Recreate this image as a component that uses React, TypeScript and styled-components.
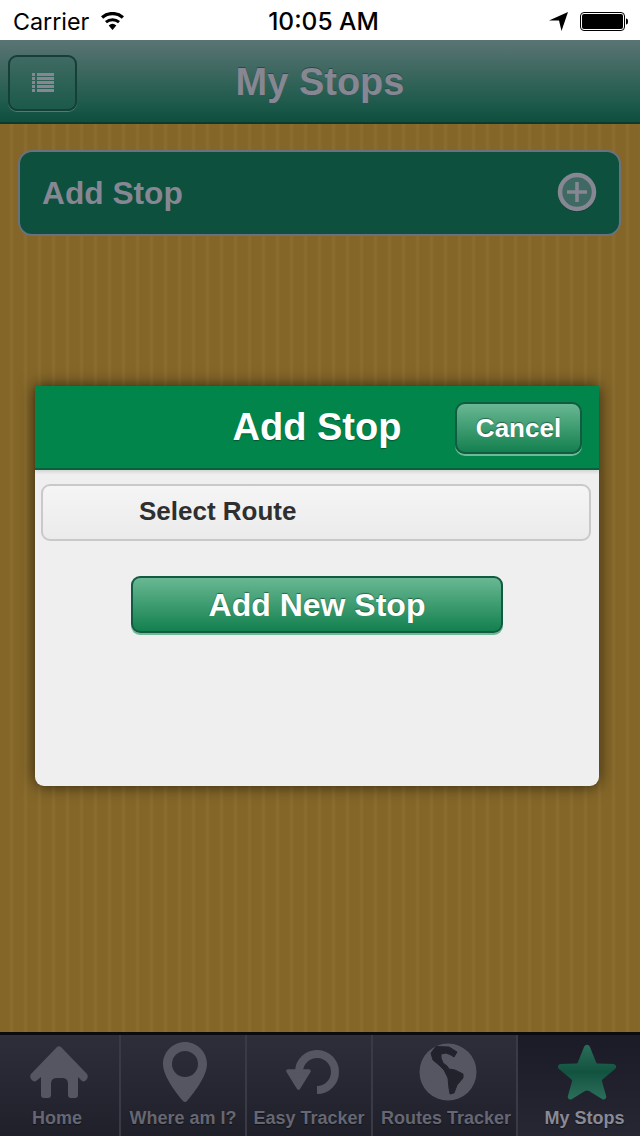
import React from "react";
import styled, { createGlobalStyle } from "styled-components";

const GlobalStyle = createGlobalStyle`
  html, body {
    margin: 0;
    padding: 0;
    width: 640px;
    height: 1136px;
    overflow: hidden;
    font-family: "Liberation Sans", Arial, sans-serif;
  }
  * { box-sizing: border-box; }
`;

const Screen = styled.div`
  position: relative;
  width: 640px;
  height: 1136px;
  display: flex;
  flex-direction: column;
  background: #fff;
`;

const StatusBar = styled.div`
  height: 40px;
  padding: 2px 12px 0 13px;
  display: grid;
  grid-template-columns: 1fr auto 1fr;
  align-items: center;
  background: #fff;
  color: #000;
  font-family: Inter, "Liberation Sans", sans-serif;
`;

const StatusLeft = styled.div`
  display: flex;
  align-items: center;
  gap: 11px;
  font-size: 23.300px;
  font-weight: 400;
`;

const StatusTime = styled.div`
  margin-left: 6px;
  font-size: 24.500px;
  font-weight: 500;
`;

const StatusRight = styled.div`
  display: flex;
  align-items: center;
  justify-content: flex-end;
  gap: 12px;
`;

const NavBar = styled.div`
  position: relative;
  height: 84px;
  flex: none;
  display: flex;
  align-items: center;
  justify-content: center;
  padding-top: 3px;
  background: linear-gradient(#5a7474 0%, #436a64 30%, #1d5a4b 78%, #10503f 97%);
  border-bottom: 2px solid #0d3a30;
`;

const MenuButton = styled.div`
  position: absolute;
  left: 8px;
  top: 15px;
  width: 69px;
  height: 56px;
  display: flex;
  align-items: center;
  justify-content: center;
  border: 2px solid #153f38;
  border-radius: 9px;
  background: linear-gradient(#3f6a63, #1b5a4a);
  box-shadow: 0 1px 0 rgba(120, 150, 145, 0.6);
`;

const NavTitle = styled.div`
  font-size: 38px;
  font-weight: 700;
  color: #868793;
  text-shadow: 0 -1px 0 #2b4a46;
`;

const Content = styled.div`
  flex: 1;
  padding: 26px 19px 26px 18px;
  background: repeating-linear-gradient(
    90deg,
    #846628 0,
    #846628 9px,
    #8b6d30 11px,
    #8b6d30 12px,
    #846628 14px
  );
`;

const AddStopBar = styled.div`
  height: 86px;
  padding: 0 22px;
  display: flex;
  align-items: center;
  justify-content: space-between;
  background: #0e503e;
  border: 2px solid #6a717c;
  border-radius: 14px;
  color: #868793;
  font-size: 31.700px;
  font-weight: 700;
`;

const Overlay = styled.div`
  position: absolute;
  left: 35px;
  top: 386px;
  width: 564px;
  height: 400px;
  display: flex;
  flex-direction: column;
  background: #efefef;
  border-radius: 0 0 9px 9px;
  box-shadow: 0 0 16px rgba(0, 0, 0, 0.65);
`;

const DialogHeader = styled.div`
  position: relative;
  height: 84px;
  flex: none;
  display: flex;
  align-items: center;
  justify-content: center;
  background: #01854b;
  border-bottom: 2px solid #0a5f3c;
  box-shadow: 0 2px 3px rgba(0, 0, 0, 0.12);
`;

const DialogTitle = styled.div`
  font-size: 38px;
  font-weight: 700;
  color: #fff;
  text-shadow: 0 1px 1px rgba(0, 0, 0, 0.35);
`;

const GreenButton = styled.div`
  display: flex;
  align-items: center;
  justify-content: center;
  color: #fff;
  font-weight: 700;
  border: 2px solid #125a42;
  background: linear-gradient(#69b893, #13804f);
  box-shadow: 0 2px 0 #6dbb94;
  text-shadow: 0 -1px 1px rgba(0, 0, 0, 0.4);
`;

const CancelButton = styled(GreenButton)`
  position: absolute;
  right: 17px;
  top: 16px;
  width: 127px;
  height: 52px;
  border-radius: 10px;
  font-size: 26px;
`;

const DialogBody = styled.div`
  padding: 14px 8px 0 6px;
  display: flex;
  flex-direction: column;
  align-items: center;
  gap: 35px;
`;

const SelectRow = styled.div`
  width: 100%;
  height: 57px;
  padding: 0 0 2px 96px;
  display: flex;
  align-items: center;
  background: linear-gradient(#f5f5f5, #ebebeb);
  border: 2px solid #c9c9c9;
  border-radius: 9px;
  color: #2f2f2f;
  font-size: 26px;
  font-weight: 700;
`;

const AddNewButton = styled(GreenButton)`
  width: 372px;
  height: 57px;
  margin-left: 2px;
  padding-top: 2px;
  border-radius: 9px;
  font-size: 32px;
`;

const TabBar = styled.div`
  height: 104px;
  flex: none;
  display: grid;
  grid-template-columns: 121px 126px 126px 145px 122px;
  background: linear-gradient(#2e2e3b, #20202b);
  border-top: 3px solid #0b0b10;
`;

const Tab = styled.div<{ $active?: boolean }>`
  display: flex;
  flex-direction: column;
  align-items: center;
  justify-content: flex-end;
  padding-bottom: 7px;
  border-right: ${(p) => (p.$active ? "none" : "2px solid #3a3a47")};
  background: ${(p) =>
    p.$active ? "linear-gradient(#1b1b27, #272733)" : "transparent"};
`;

const TabIcon = styled.div<{ $shift: number }>`
  height: 66px;
  padding-bottom: 5px;
  margin-left: ${(p) => p.$shift * 2}px;
  display: flex;
  align-items: center;
  justify-content: center;
`;

const TabLabel = styled.div<{ $active?: boolean; $shift: number }>`
  font-size: 18px;
  line-height: 22px;
  font-weight: 700;
  white-space: nowrap;
  margin-left: ${(p) => p.$shift}px;
  margin-right: ${(p) => -p.$shift}px;
  color: ${(p) => (p.$active ? "#8a8a95" : "#666772")};
  text-shadow: 0 1px 1px rgba(0, 0, 0, 0.5);
`;

const tabs = [
  {
    label: "Home",
    iconShift: -0.5,
    labelShift: -2.5,
    icon: (
      <svg width="58" height="52" viewBox="0 0 58 52">
        <path
          fill="#555661"
          d="M27 1c1-1 3-1 4 0l26 27c1 2 1 3 0 5l-2 2c-1 .5-2 .5-3 0l-4-4v18c0 2-1 3-3 3h-4c-2 0-3-1-3-3V38c0-4-2-6-6-6h-5c-4 0-6 2-6 6v11c0 2-1 3-3 3h-4c-2 0-3-1-3-3V31l-5 4c-1 .5-2 .5-3 0l-2-2c-1-2-1-3 0-5z"
        />
      </svg>
    ),
  },
  {
    label: "Where am I?",
    iconShift: 2,
    labelShift: 0,
    icon: (
      <svg width="44" height="60" viewBox="0 0 44 60">
        <path
          fillRule="evenodd"
          fill="#555661"
          d="M22 0C10 0 0 10 0 22c0 13 15 31 20 37 1 1.300 3 1.300 4 0 5-6 20-24 20-37C44 10 34 0 22 0zm0 9a13 13 0 1 1 0 26 13 13 0 0 1 0-26z"
        />
      </svg>
    ),
  },
  {
    label: "Easy Tracker",
    iconShift: 3.5,
    labelShift: 0,
    icon: (
      <svg width="54" height="44" viewBox="0 0 54 44">
        <path
          d="M13 21A18 18 0 1 1 31 40"
          fill="none"
          stroke="#555661"
          strokeWidth="8"
        />
        <path
          d="M2 21h21L12.500 38z"
          fill="#555661"
          stroke="#555661"
          strokeWidth="3.500"
          strokeLinejoin="round"
        />
      </svg>
    ),
  },
  {
    label: "Routes Tracker",
    iconShift: 3.5,
    labelShift: 1.5,
    icon: (
      <svg width="58" height="58" viewBox="0 0 58 58">
        <circle cx="29" cy="29" r="28.500" fill="#555661" />
        <path
          fill="#22222d"
          stroke="#22222d"
          strokeWidth="1"
          strokeLinejoin="round"
          d="M12 10L14 17L20 22L25 27L29 35L30 45L31 51L35 50L38 42L44 35L44 31L36 27L30 26L28 23L24 20L22 15L22 11L27 10L32 12L35 14L38 9L30 4L17 3.500z"
        />
      </svg>
    ),
  },
  {
    label: "My Stops",
    active: true,
    iconShift: 8,
    labelShift: 5.5,
    icon: (
      <svg width="58" height="56" viewBox="0 0 58 56">
        <defs>
          <linearGradient id="starFill" x1="0" y1="0" x2="0" y2="1">
            <stop offset="0" stopColor="#2a6d58" />
            <stop offset="0.500" stopColor="#125340" />
            <stop offset="1" stopColor="#2b6f5a" />
          </linearGradient>
        </defs>
        <path
          fill="url(#starFill)"
          d="M26 3c1.500-3 4.500-3 6 0l6 15c.5 1 1 1.500 2 1.500l15 .5c3 0 4 3 2 5L45 35c-1 .7-1 1.500-1 2.500l4 14c1 3-1.500 5-4 3.500l-13-8c-1.300-.8-2.700-.8-4 0l-13 8c-2.500 1.500-5-.5-4-3.500l4-14c0-1 0-1.800-1-2.500L1 25c-2-2-1-5 2-5l15-.5c1 0 1.500-.5 2-1.500z"
        />
      </svg>
    ),
  },
];

const App: React.FC = () => {
  return (
    <Screen>
      <GlobalStyle />
      <StatusBar>
        <StatusLeft>
          Carrier
          <svg width="25" height="18" viewBox="0 0 25 18">
            <path
              d="M12.500 18l-3.800-4.600a6 6 0 0 1 7.600 0zM6.900 11.200L5 9a11.500 11.500 0 0 1 15 0l-1.900 2.200a8.700 8.700 0 0 0-11.200 0zM3.200 6.800L1 4.200a17.500 17.500 0 0 1 23 0l-2.200 2.600a14.200 14.200 0 0 0-18.600 0z"
              fill="#000"
            />
          </svg>
        </StatusLeft>
        <StatusTime>10:05 AM</StatusTime>
        <StatusRight>
          <svg width="19" height="19" viewBox="0 0 19 19">
            <path d="M0 8.500L19 0l-6.500 19-2.500-10.500z" fill="#000" />
          </svg>
          <svg width="48" height="19" viewBox="0 0 48 19">
            <rect x="0.500" y="0.500" width="44" height="18" rx="3.500" fill="none" stroke="#000" />
            <rect x="2" y="2" width="41" height="15" rx="2" fill="#000" />
            <path d="M46 6.500c1.500 0 2 1 2 3s-.5 3-2 3z" fill="#000" />
          </svg>
        </StatusRight>
      </StatusBar>

      <NavBar>
        <MenuButton>
          <svg width="22" height="21" viewBox="0 0 22 21">
            {[0, 4, 8, 12, 16].map((y) => (
              <g key={y} fill="#868793">
                <rect x="0" y={y} width="3" height="3" />
                <rect x="5" y={y} width="17" height="3" />
              </g>
            ))}
          </svg>
        </MenuButton>
        <NavTitle>My Stops</NavTitle>
      </NavBar>

      <Content>
        <AddStopBar>
          Add Stop
          <svg width="40" height="42" viewBox="0 0 40 42">
            <circle cx="20" cy="21" r="19" fill="#000" opacity="0.25" />
            <circle cx="20" cy="20" r="17" fill="#3f6a63" stroke="#868793" strokeWidth="4.500" />
            <path d="M18.200 10h3.600v8.200H30v3.600h-8.200V30h-3.600v-8.200H10v-3.600h8.200z" fill="#868793" />
          </svg>
        </AddStopBar>
      </Content>

      <TabBar>
        {tabs.map((tab) => (
          <Tab key={tab.label} $active={tab.active}>
            <TabIcon $shift={tab.iconShift}>{tab.icon}</TabIcon>
            <TabLabel $active={tab.active} $shift={tab.labelShift}>
              {tab.label}
            </TabLabel>
          </Tab>
        ))}
      </TabBar>

      <Overlay>
        <DialogHeader>
          <DialogTitle>Add Stop</DialogTitle>
          <CancelButton>Cancel</CancelButton>
        </DialogHeader>
        <DialogBody>
          <SelectRow>Select Route</SelectRow>
          <AddNewButton>Add New Stop</AddNewButton>
        </DialogBody>
      </Overlay>
    </Screen>
  );
};

export default App;
